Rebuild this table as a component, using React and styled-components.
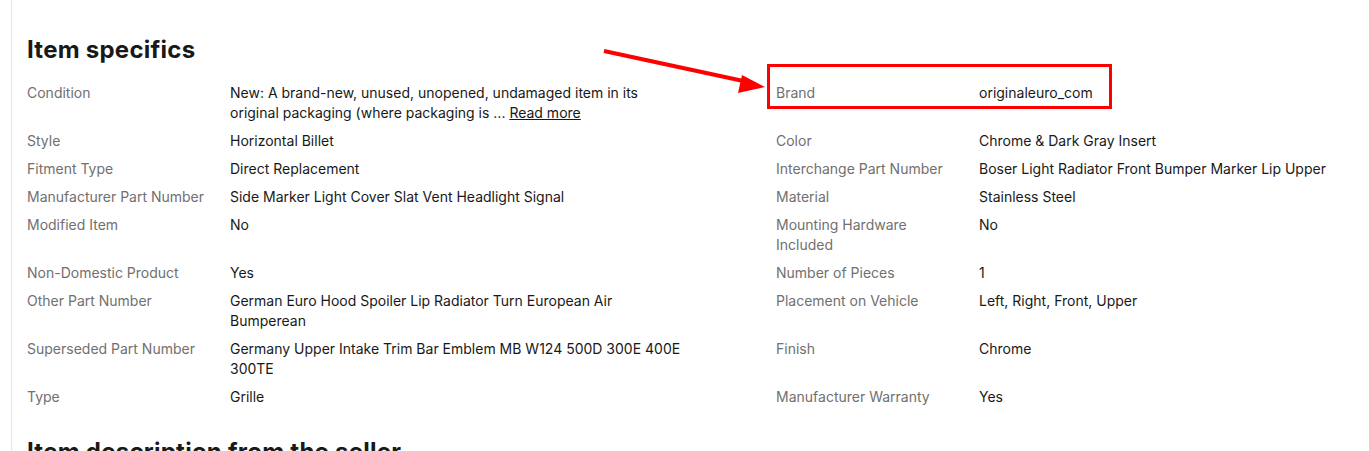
import React from "react";
import styled, { createGlobalStyle } from "styled-components";

const Global = createGlobalStyle`
  html, body { margin: 0; padding: 0; background: #fff; }
  body { font-family: Inter, "Liberation Sans", Arial, sans-serif; color: #191919; }
`;

const Page = styled.div`
  position: relative;
  width: 1369px;
  height: 451px;
  overflow: hidden;
  background: #fff;
`;

const Panel = styled.section`
  margin-left: 11px;
  border-left: 1px solid #e5e5e5;
  padding: 34px 0 0 15px;
  min-height: 451px;
  box-sizing: border-box;
`;

const Heading = styled.h2`
  margin: 0 0 17px;
  font-size: 24px;
  line-height: 32px;
  font-weight: 700;
  color: #191919;
  letter-spacing: 0.25px;
`;

const NextHeading = styled(Heading)`
  margin-top: 29px;
`;

const Row = styled.div`
  display: grid;
  grid-template-columns: 749px 1fr;
  margin-bottom: 8px;
`;

const Item = styled.div`
  position: relative;
  display: grid;
  grid-template-columns: 203px 452px;
  font-size: 14px;
  line-height: 20px;
`;

const Label = styled.div`
  color: #707070;
  padding-right: 20px;
`;

const Value = styled.div`
  color: #191919;
`;

const ReadMore = styled.a`
  color: #191919;
  text-decoration: underline;
  cursor: pointer;
`;

const HighlightBox = styled.div`
  position: absolute;
  left: -9px;
  top: -19px;
  width: 345px;
  height: 45px;
  box-sizing: border-box;
  border: 3px solid #ff0000;
  pointer-events: none;
`;

const Arrow = styled.svg`
  position: absolute;
  left: 600px;
  top: 44px;
  overflow: visible;
`;

const rows = [
  [
    {
      label: "Condition",
      value: (
        <>
          New: A brand-new, unused, unopened, undamaged item in its original packaging (where packaging is ...{" "}
          <ReadMore>Read more</ReadMore>
        </>
      ),
    },
    { label: "Brand", value: "originaleuro_com", highlight: true },
  ],
  [
    { label: "Style", value: "Horizontal Billet" },
    { label: "Color", value: "Chrome & Dark Gray Insert" },
  ],
  [
    { label: "Fitment Type", value: "Direct Replacement" },
    { label: "Interchange Part Number", value: "Boser Light Radiator Front Bumper Marker Lip Upper" },
  ],
  [
    { label: "Manufacturer Part Number", value: "Side Marker Light Cover Slat Vent Headlight Signal" },
    { label: "Material", value: "Stainless Steel" },
  ],
  [
    { label: "Modified Item", value: "No" },
    { label: "Mounting Hardware Included", value: "No" },
  ],
  [
    { label: "Non-Domestic Product", value: "Yes" },
    { label: "Number of Pieces", value: "1" },
  ],
  [
    { label: "Other Part Number", value: "German Euro Hood Spoiler Lip Radiator Turn European Air Bumperean" },
    { label: "Placement on Vehicle", value: "Left, Right, Front, Upper" },
  ],
  [
    { label: "Superseded Part Number", value: "Germany Upper Intake Trim Bar Emblem MB W124 500D 300E 400E 300TE" },
    { label: "Finish", value: "Chrome" },
  ],
  [
    { label: "Type", value: "Grille" },
    { label: "Manufacturer Warranty", value: "Yes" },
  ],
];

export default function App() {
  return (
    <Page>
      <Global />
      <Panel>
        <Heading>Item specifics</Heading>
        {rows.map((row, i) => (
          <Row key={i}>
            {row.map((it) => (
              <Item key={it.label}>
                <Label>{it.label}</Label>
                <Value>{it.value}</Value>
                {it.highlight && <HighlightBox />}
              </Item>
            ))}
          </Row>
        ))}
        <NextHeading>Item description from the seller</NextHeading>
      </Panel>
      <Arrow width="170" height="56" viewBox="0 0 170 56">
        <line x1="4" y1="7" x2="148" y2="38" stroke="#ff0000" strokeWidth="4" strokeLinecap="butt" />
        <polygon points="165,43 142,31 138,49" fill="#ff0000" />
      </Arrow>
    </Page>
  );
}
